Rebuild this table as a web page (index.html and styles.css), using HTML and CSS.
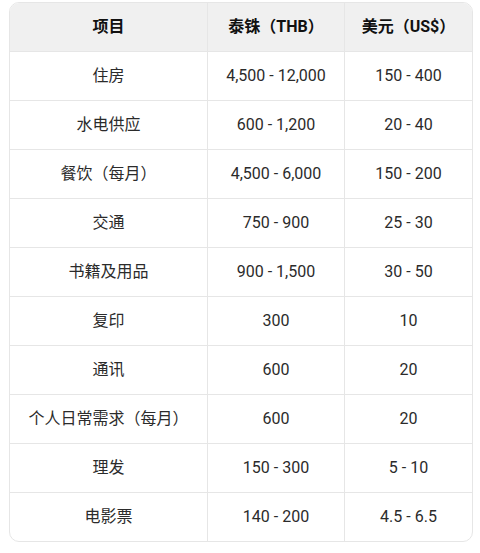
FILE: index.html
```html
<!DOCTYPE html>
<html lang="zh">
<head>
<meta charset="utf-8">
<link rel="stylesheet" href="styles.css">
</head>
<body>
<div class="wrap">
<table class="cost">
<thead>
<tr><th class="c1">项目</th><th class="c2">泰铢（THB）</th><th class="c3">美元（US$）</th></tr>
</thead>
<tbody>
<tr><td>住房</td><td>4,500 - 12,000</td><td>150 - 400</td></tr>
<tr><td>水电供应</td><td>600 - 1,200</td><td>20 - 40</td></tr>
<tr><td>餐饮（每月）</td><td>4,500 - 6,000</td><td>150 - 200</td></tr>
<tr><td>交通</td><td>750 - 900</td><td>25 - 30</td></tr>
<tr><td>书籍及用品</td><td>900 - 1,500</td><td>30 - 50</td></tr>
<tr><td>复印</td><td>300</td><td>10</td></tr>
<tr><td>通讯</td><td>600</td><td>20</td></tr>
<tr><td>个人日常需求（每月）</td><td>600</td><td>20</td></tr>
<tr><td>理发</td><td>150 - 300</td><td>5 - 10</td></tr>
<tr><td>电影票</td><td>140 - 200</td><td>4.5 - 6.5</td></tr>
</tbody>
</table>
</div>
</body>
</html>
```
FILE: styles.css
```css
html, body { margin: 0; padding: 0; background: #fff; }
body {
  font-family: Roboto, "Noto Sans CJK SC", sans-serif;
  font-size: 16px;
  color: #2b2b2b;
}
.wrap {
  margin: 2px 0 0 9px;
  width: 464px;
  border: 1px solid #e6e6e6;
  border-radius: 10px;
  overflow: hidden;
  box-sizing: border-box;
}
.cost {
  width: 100%;
  border-collapse: collapse;
  table-layout: fixed;
}
.cost th, .cost td {
  text-align: center;
  vertical-align: middle;
  padding: 0;
  border-right: 1px solid #e6e6e6;
  border-bottom: 1px solid #e6e6e6;
  line-height: 20px;
}
.cost th:last-child, .cost td:last-child { border-right: none; }
.cost tbody tr:last-child td { border-bottom: none; }
.cost th {
  height: 48px;
  background: #f0f0f0;
  font-weight: 700;
  color: #111;
}
.cost td { height: 48px; }
.c1 { width: 197px; }
.c2 { width: 136px; }
```
